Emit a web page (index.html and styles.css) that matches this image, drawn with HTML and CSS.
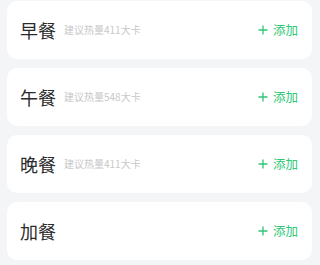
FILE: index.html
```html
<!DOCTYPE html>
<html lang="zh">
<head>
<meta charset="utf-8">
<link rel="stylesheet" href="styles.css">
</head>
<body>
<div class="list">
  <div class="card">
    <div class="info"><span class="title">早餐</span><span class="hint">建议热量411大卡</span></div>
    <div class="add"><svg class="plus" viewBox="0 0 10 10" width="10" height="10"><path d="M5 0.5V9.5M0.5 5H9.5" stroke="currentColor" stroke-width="1.3" fill="none"/></svg><span>添加</span></div>
  </div>
  <div class="card">
    <div class="info"><span class="title">午餐</span><span class="hint">建议热量548大卡</span></div>
    <div class="add"><svg class="plus" viewBox="0 0 10 10" width="10" height="10"><path d="M5 0.5V9.5M0.5 5H9.5" stroke="currentColor" stroke-width="1.3" fill="none"/></svg><span>添加</span></div>
  </div>
  <div class="card">
    <div class="info"><span class="title">晚餐</span><span class="hint">建议热量411大卡</span></div>
    <div class="add"><svg class="plus" viewBox="0 0 10 10" width="10" height="10"><path d="M5 0.5V9.5M0.5 5H9.5" stroke="currentColor" stroke-width="1.3" fill="none"/></svg><span>添加</span></div>
  </div>
  <div class="card">
    <div class="info"><span class="title">加餐</span></div>
    <div class="add"><svg class="plus" viewBox="0 0 10 10" width="10" height="10"><path d="M5 0.5V9.5M0.5 5H9.5" stroke="currentColor" stroke-width="1.3" fill="none"/></svg><span>添加</span></div>
  </div>
</div>
</body>
</html>
```
FILE: styles.css
```css
html, body {
  margin: 0;
  padding: 0;
  background: #f4f5f7;
  font-family: "Noto Sans CJK SC", "Noto Sans", sans-serif;
}
.list {
  display: flex;
  flex-direction: column;
  gap: 9px;
  padding: 1px 8px 0 7px;
}
.card {
  height: 58px;
  background: #ffffff;
  border-radius: 10px;
  display: flex;
  align-items: center;
  justify-content: space-between;
  padding: 0 14px 0 13px;
}
.info {
  display: flex;
  align-items: center;
  gap: 8px;
}
.title {
  font-size: 18px;
  color: #2b2b2b;
  line-height: 1;
}
.hint {
  font-size: 10px;
  color: #c8c8c8;
  line-height: 1;
}
.add {
  display: flex;
  align-items: center;
  gap: 5px;
  color: #2ec776;
  font-size: 12.5px;
  line-height: 1;
}
.plus {
  display: block;
}
```
